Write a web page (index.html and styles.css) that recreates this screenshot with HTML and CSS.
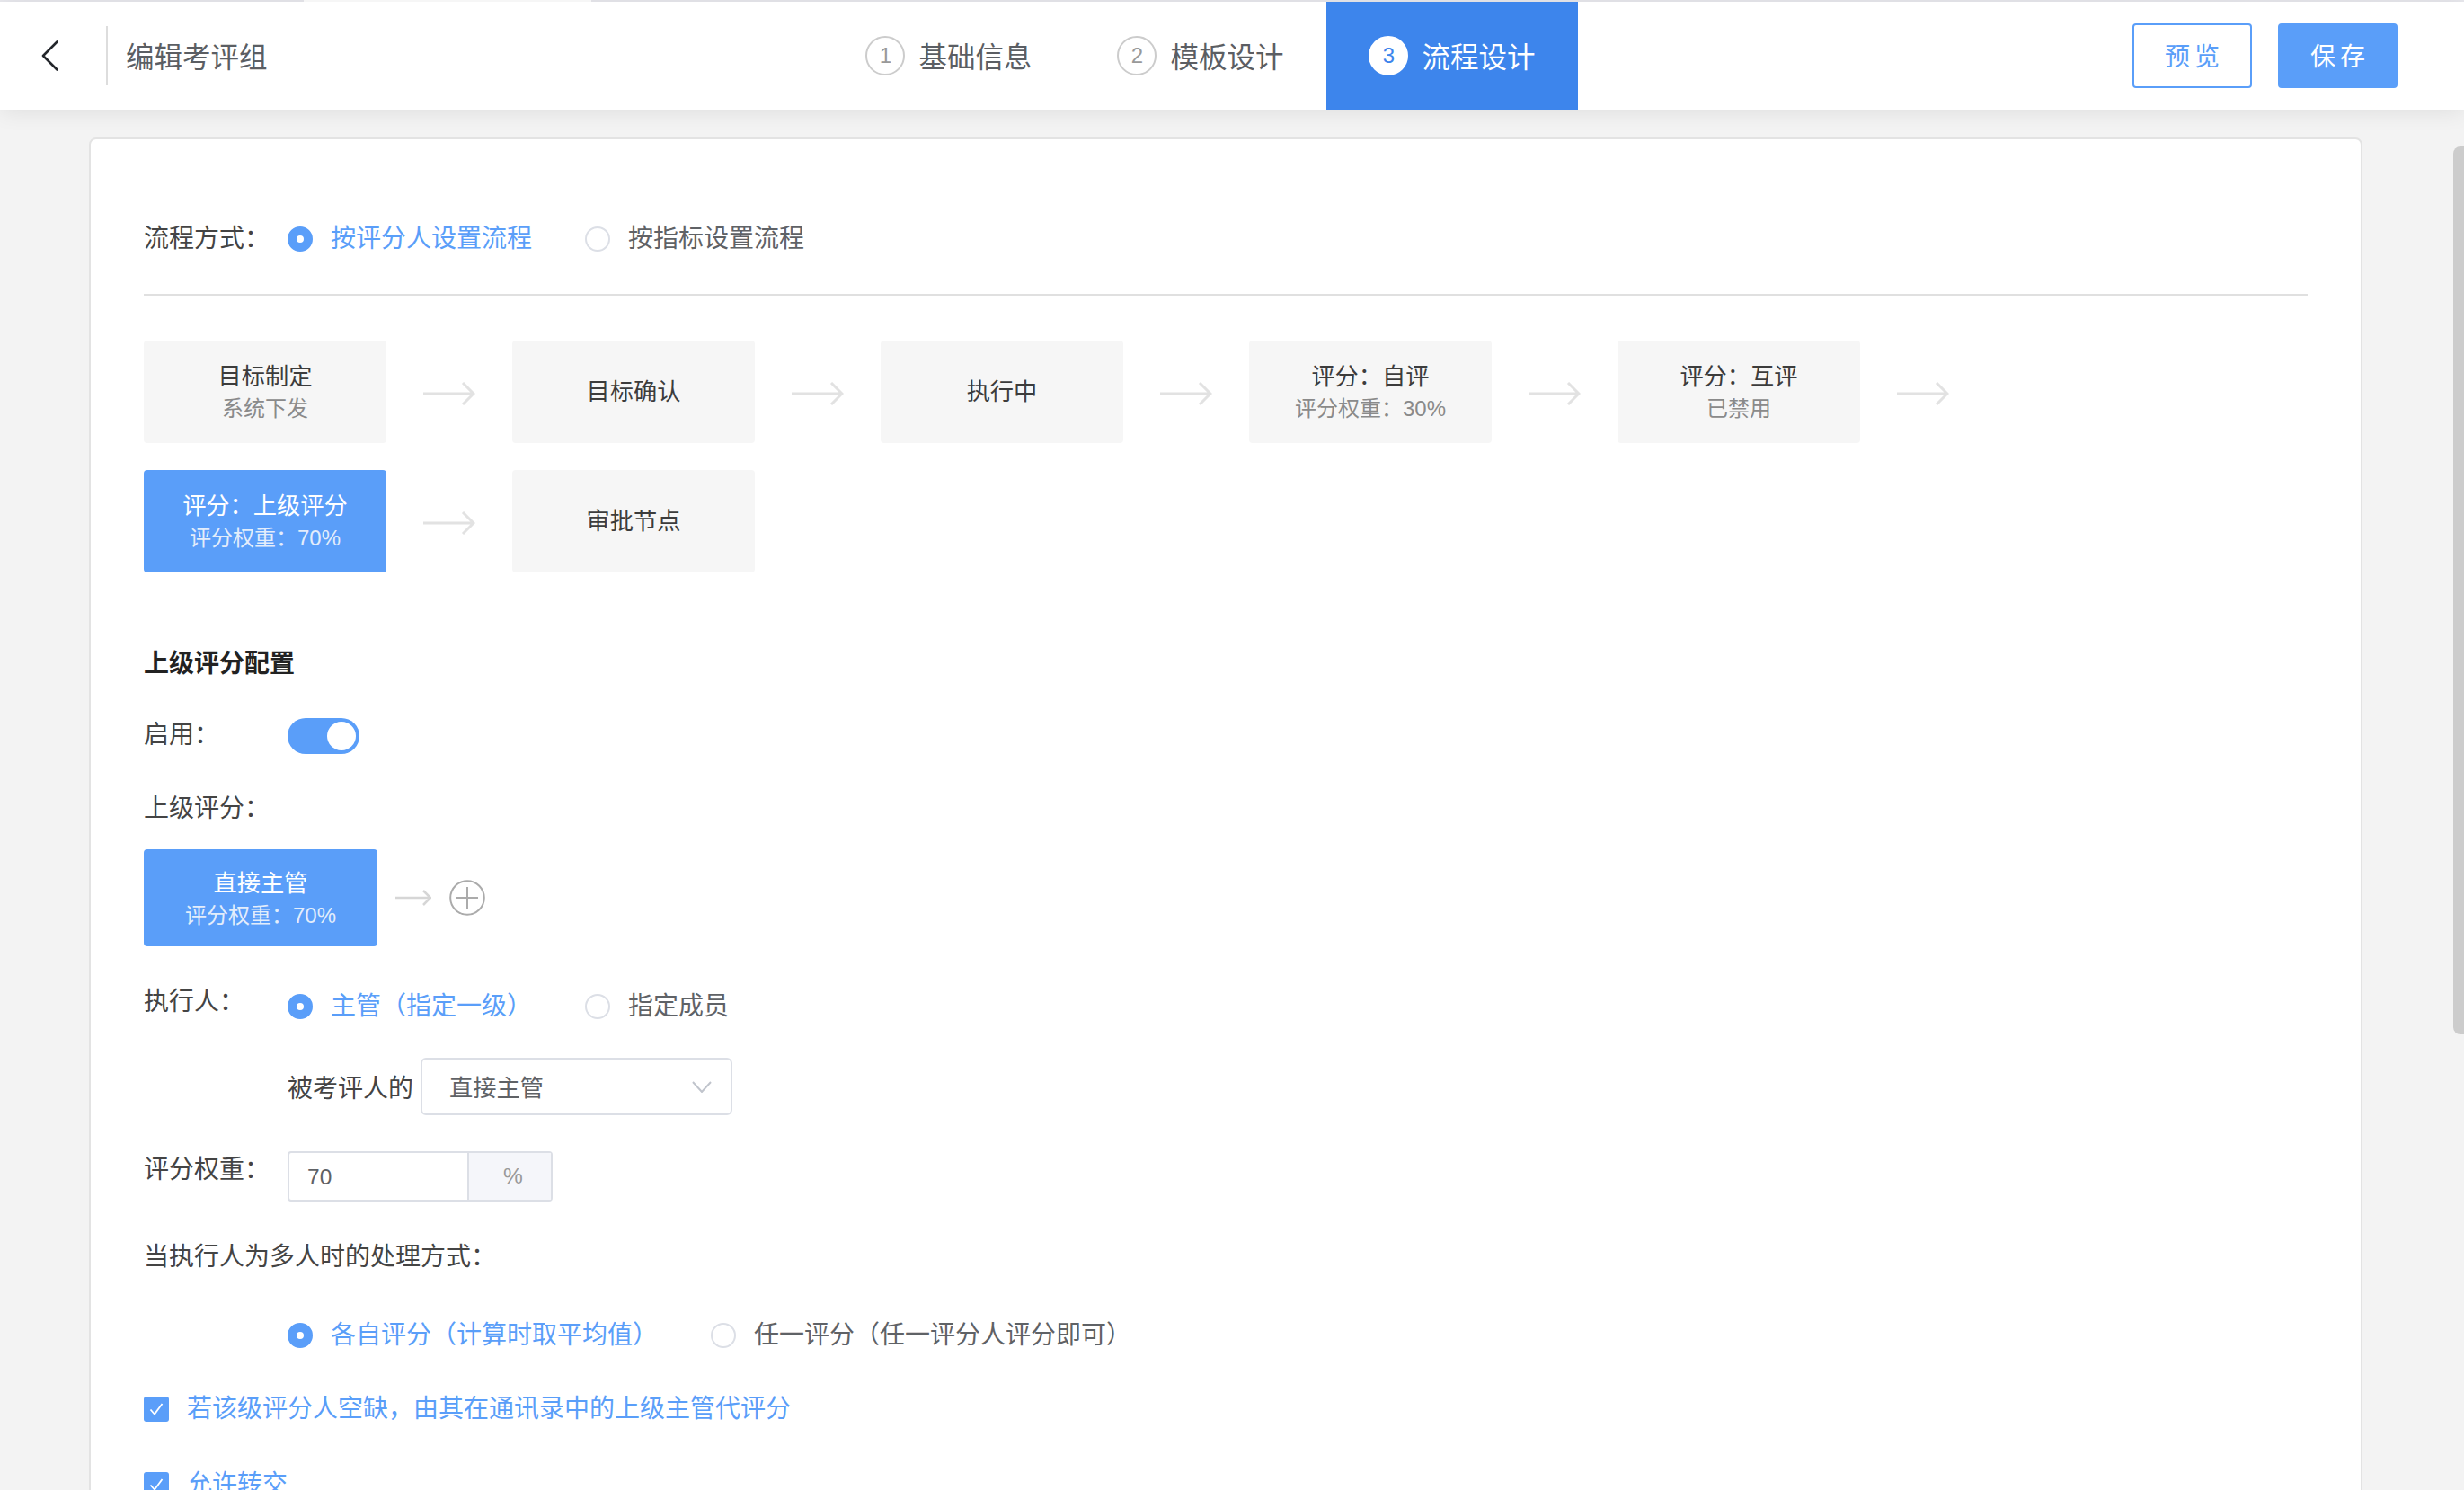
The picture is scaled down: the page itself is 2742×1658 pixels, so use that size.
FILE: index.html
```html
<!DOCTYPE html>
<html lang="zh-CN">
<head>
    <meta charset="UTF-8">
    <title>编辑考评组</title>
    <link rel="stylesheet" href="styles.css">
</head>
<body>
    <div class="top-strip"><div class="top-strip-gap"></div></div>

    <header class="header">
        <div class="header-left">
            <svg class="back-icon" width="20" height="34" viewBox="0 0 20 34"><path d="M17.500 1.500 2 17 17.500 32.500" fill="none" stroke="#23262b" stroke-width="2.600" stroke-linecap="round" stroke-linejoin="round"/></svg>
            <div class="header-divider"></div>
            <div class="header-title">编辑考评组</div>
        </div>
        <div class="steps">
            <div class="step"><span class="step-num">1</span>基础信息</div>
            <div class="step"><span class="step-num">2</span>模板设计</div>
            <div class="step step-active"><span class="step-num">3</span>流程设计</div>
        </div>
        <div class="header-actions">
            <button class="btn btn-outline">预览</button>
            <button class="btn btn-primary">保存</button>
        </div>
    </header>

    <div class="scroll-thumb"></div>

    <main class="main">
        <div class="card">
            <div class="form-row row-mode">
                <div class="label">流程方式：</div>
                <div class="radio-group">
                    <div class="radio radio-on"><span class="radio-dot"></span>按评分人设置流程</div>
                    <div class="radio"><span class="radio-dot"></span>按指标设置流程</div>
                </div>
            </div>
            <div class="divider"></div>

            <div class="flow">
                <div class="flow-row">
                    <div class="node"><div class="node-main">目标制定</div><div class="node-sub">系统下发</div></div>
                    <div class="flow-arrow"><svg width="58" height="26" viewBox="0 0 58 26"><path d="M0 13H55M44 1 56 13 44 25" fill="none" stroke="#e2e2e2" stroke-width="3"/></svg></div>
                    <div class="node"><div class="node-main">目标确认</div></div>
                    <div class="flow-arrow"><svg width="58" height="26" viewBox="0 0 58 26"><path d="M0 13H55M44 1 56 13 44 25" fill="none" stroke="#e2e2e2" stroke-width="3"/></svg></div>
                    <div class="node"><div class="node-main">执行中</div></div>
                    <div class="flow-arrow"><svg width="58" height="26" viewBox="0 0 58 26"><path d="M0 13H55M44 1 56 13 44 25" fill="none" stroke="#e2e2e2" stroke-width="3"/></svg></div>
                    <div class="node"><div class="node-main">评分：自评</div><div class="node-sub">评分权重：30%</div></div>
                    <div class="flow-arrow"><svg width="58" height="26" viewBox="0 0 58 26"><path d="M0 13H55M44 1 56 13 44 25" fill="none" stroke="#e2e2e2" stroke-width="3"/></svg></div>
                    <div class="node"><div class="node-main">评分：互评</div><div class="node-sub">已禁用</div></div>
                    <div class="flow-arrow"><svg width="58" height="26" viewBox="0 0 58 26"><path d="M0 13H55M44 1 56 13 44 25" fill="none" stroke="#e2e2e2" stroke-width="3"/></svg></div>
                </div>
                <div class="flow-row">
                    <div class="node node-active"><div class="node-main">评分：上级评分</div><div class="node-sub">评分权重：70%</div></div>
                    <div class="flow-arrow"><svg width="58" height="26" viewBox="0 0 58 26"><path d="M0 13H55M44 1 56 13 44 25" fill="none" stroke="#e2e2e2" stroke-width="3"/></svg></div>
                    <div class="node"><div class="node-main">审批节点</div></div>
                </div>
            </div>

            <div class="section-title">上级评分配置</div>

            <div class="form-row row-enable">
                <div class="label label-raised">启用：</div>
                <div class="switch"><span class="switch-knob"></span></div>
            </div>

            <div class="form-row row-superior">
                <div class="label">上级评分：</div>
            </div>

            <div class="approver-row">
                <div class="node node-active node-approver"><div class="node-main">直接主管</div><div class="node-sub">评分权重：70%</div></div>
                <svg class="approver-arrow" width="40" height="18" viewBox="0 0 40 18"><path d="M0 9H38M31 1 39 9 31 17" fill="none" stroke="#d6d6d6" stroke-width="2.500"/></svg>
                <svg class="add-icon" width="40" height="40" viewBox="0 0 40 40"><circle cx="20" cy="20" r="18.800" fill="none" stroke="#ababab" stroke-width="2"/><path d="M20 8V32M8 20H32" fill="none" stroke="#ababab" stroke-width="2"/></svg>
            </div>

            <div class="form-row row-executor">
                <div class="label label-executor">执行人：</div>
                <div class="radio-group">
                    <div class="radio radio-on"><span class="radio-dot"></span>主管（指定一级）</div>
                    <div class="radio"><span class="radio-dot"></span>指定成员</div>
                </div>
            </div>

            <div class="form-row row-select">
                <div class="select-prefix">被考评人的</div>
                <div class="select">
                    <span>直接主管</span>
                    <svg width="22" height="13" viewBox="0 0 22 13"><path d="M1 1 11 12 21 1" fill="none" stroke="#c0c4cc" stroke-width="2"/></svg>
                </div>
            </div>

            <div class="form-row row-weight">
                <div class="label label-weight">评分权重：</div>
                <div class="input-group">
                    <div class="input-value">70</div>
                    <div class="input-addon">%</div>
                </div>
            </div>

            <div class="form-row row-multi">
                <div class="label label-wide">当执行人为多人时的处理方式：</div>
            </div>

            <div class="form-row row-multi-options">
                <div class="radio-group">
                    <div class="radio radio-on"><span class="radio-dot"></span>各自评分（计算时取平均值）</div>
                    <div class="radio"><span class="radio-dot"></span>任一评分（任一评分人评分即可）</div>
                </div>
            </div>

            <div class="form-row row-check">
                <div class="checkbox">
                    <span class="check-box"><svg width="18" height="16" viewBox="0 0 18 16"><path d="M2.500 8.500 7 13.500 15.500 2" fill="none" stroke="#fff" stroke-width="1.800"/></svg></span>若该级评分人空缺，由其在通讯录中的上级主管代评分
                </div>
            </div>

            <div class="form-row row-check-last">
                <div class="checkbox">
                    <span class="check-box"><svg width="18" height="16" viewBox="0 0 18 16"><path d="M2.500 8.500 7 13.500 15.500 2" fill="none" stroke="#fff" stroke-width="1.800"/></svg></span>允许转交
                </div>
            </div>
        </div>
    </main>
</body>
</html>
```

FILE: styles.css
```css
html, body {
    margin: 0;
    padding: 0;
    height: 100%;
    overflow: hidden;
}

body {
    font-family: "Liberation Sans", "Noto Sans CJK SC", sans-serif;
    font-size: 28px;
    color: #444;
    background-color: #f3f3f3;
}

/* top edge of the window */
.top-strip {
    height: 2px;
    background-color: #e9e9ee;
}

.top-strip-gap {
    width: 320px;
    height: 2px;
    margin-left: 338px;
    background-color: #fff;
}

.header {
    display: flex;
    align-items: center;
    height: 120px;
    background-color: #fff;
    box-shadow: 0 2px 24px rgba(0, 0, 0, 0.09);
    position: relative;
}

.header-left {
    display: flex;
    align-items: center;
    width: 916px;
}

.back-icon {
    margin-left: 46px;
    margin-right: 52px;
}

.header-divider {
    width: 2px;
    height: 66px;
    background-color: #ddd;
}

.header-title {
    margin-left: 20px;
    padding-bottom: 3px;
    font-size: 31.500px;
    color: #5b5e63;
}

.steps {
    display: flex;
    height: 100%;
}

.step {
    display: flex;
    align-items: center;
    justify-content: center;
    box-sizing: border-box;
    width: 280px;
    padding-bottom: 3px;
    font-size: 31.500px;
    color: #5b5e63;
}

.step-num {
    display: flex;
    align-items: center;
    justify-content: center;
    box-sizing: border-box;
    width: 44px;
    height: 44px;
    margin-top: 3px;
    margin-right: 15px;
    border: 2px solid #ccc;
    border-radius: 50%;
    font-size: 24px;
    color: #999;
}

.step-active {
    color: #fff;
    background-color: #3d85ec;
}

.step-active .step-num {
    border-color: #fff;
    background-color: #fff;
    color: #3d85ec;
}

.header-actions {
    display: flex;
    gap: 29px;
    margin-left: auto;
    margin-right: 74px;
}

.btn {
    width: 133px;
    height: 72px;
    padding: 0 0 3px 5px;
    border-radius: 4px;
    border: 2px solid #5a9ef9;
    font-family: inherit;
    font-size: 28px;
    letter-spacing: 5px;
}

.btn-outline {
    background-color: #fff;
    color: #5a9ef9;
}

.btn-primary {
    background-color: #5a9ef9;
    color: #fff;
}

.scroll-thumb {
    position: absolute;
    top: 163px;
    right: 0;
    width: 12px;
    height: 988px;
    background-color: #ccc;
    border-radius: 8px 0 0 8px;
}

.main {
    padding: 31px 0 0 99px;
}

.card {
    box-sizing: border-box;
    width: 2530px;
    height: 1700px;
    padding: 90px 59px 0;
    border: 2px solid #e3e3e3;
    border-radius: 8px;
    background-color: #fff;
}

.form-row {
    display: flex;
    align-items: center;
    height: 40px;
}

.label {
    width: 160px;
    flex-shrink: 0;
    padding-bottom: 4px;
    color: #444;
    white-space: nowrap;
}

.label-raised {
    padding-bottom: 8px;
}

.label-executor {
    padding-bottom: 14px;
}

.label-weight {
    padding-bottom: 20px;
}

.label-wide {
    width: auto;
}

.radio-group {
    display: flex;
    gap: 59px;
}

.radio {
    display: flex;
    align-items: center;
    gap: 20px;
    padding-bottom: 5px;
    color: #5f6266;
    white-space: nowrap;
}

.radio-dot {
    box-sizing: border-box;
    width: 28px;
    height: 28px;
    margin-top: 6px;
    border: 2px solid #dcdfe6;
    border-radius: 50%;
    background-color: #fff;
}

.radio-on {
    color: #5a9ef9;
}

.radio-on .radio-dot {
    border: 10px solid #5a9ef9;
}

.divider {
    height: 2px;
    margin-top: 42px;
    background-color: #e0e0e0;
}

.flow {
    margin-top: 50px;
}

.flow-row {
    display: flex;
}

.flow-row + .flow-row {
    margin-top: 30px;
}

.node {
    display: flex;
    flex-direction: column;
    align-items: center;
    justify-content: center;
    box-sizing: border-box;
    width: 270px;
    height: 114px;
    border-radius: 4px;
    background-color: #f6f6f6;
}

.node-main {
    font-size: 26.250px;
    line-height: 37px;
    color: #3c3c3c;
}

.node-main:not(:only-child) {
    padding-top: 2px;
    margin-bottom: -2px;
}

.node-sub {
    font-size: 24px;
    line-height: 37px;
    color: #8a8a8a;
}

.node-active {
    background-color: #5a9ef9;
}

.node-active .node-main {
    color: #fff;
}

.node-active .node-sub {
    color: #e3edfb;
}

.flow-arrow {
    display: flex;
    align-items: center;
    justify-content: center;
    box-sizing: border-box;
    width: 140px;
    padding-top: 3px;
}

.section-title {
    margin-top: 82px;
    font-size: 28px;
    font-weight: bold;
    line-height: 40px;
    color: #222;
}

.row-enable {
    margin-top: 40px;
}

.switch {
    position: relative;
    width: 80px;
    height: 40px;
    border-radius: 20px;
    background-color: #5a9ef9;
}

.switch-knob {
    position: absolute;
    top: 4px;
    right: 4px;
    width: 32px;
    height: 32px;
    border-radius: 50%;
    background-color: #fff;
}

.row-superior {
    margin-top: 40px;
}

.approver-row {
    display: flex;
    align-items: center;
    margin-top: 26px;
}

.node-approver {
    width: 260px;
    height: 108px;
    padding-top: 1px;
}

.approver-arrow {
    margin-left: 20px;
}

.add-icon {
    margin-left: 20px;
}

.row-executor {
    margin-top: 46px;
}

.row-select {
    height: 64px;
    margin-top: 38px;
    padding-left: 160px;
}

.select-prefix {
    margin-right: 8px;
    color: #444;
    white-space: nowrap;
}

.select {
    display: flex;
    align-items: center;
    justify-content: space-between;
    box-sizing: border-box;
    width: 347px;
    height: 64px;
    padding: 0 21px 0 30px;
    border: 2px solid #dcdfe6;
    border-radius: 6px;
    font-size: 26.250px;
    color: #5f6266;
}

.row-weight {
    height: 56px;
    margin-top: 40px;
}

.input-group {
    display: flex;
    box-sizing: border-box;
    width: 295px;
    height: 56px;
    border: 2px solid #dcdfe6;
    border-radius: 4px;
    font-size: 24.500px;
}

.input-value {
    box-sizing: border-box;
    width: 198px;
    padding-left: 20px;
    line-height: 54px;
    color: #5f6266;
}

.input-addon {
    flex: 1;
    padding-left: 7px;
    border-left: 2px solid #dcdfe6;
    background-color: #f5f6fa;
    line-height: 52px;
    text-align: center;
    color: #999;
}

.row-multi {
    margin-top: 41px;
}

.row-multi-options {
    margin-top: 47px;
    padding-left: 160px;
}

.row-check {
    margin-top: 42px;
}

.row-check-last {
    margin-top: 44px;
}

.checkbox {
    display: flex;
    align-items: center;
    padding-bottom: 5px;
    color: #5a9ef9;
    white-space: nowrap;
}

.check-box {
    display: flex;
    align-items: center;
    justify-content: center;
    width: 28px;
    height: 28px;
    margin-top: 6px;
    margin-right: 20px;
    border-radius: 3px;
    background-color: #5a9ef9;
}
```
